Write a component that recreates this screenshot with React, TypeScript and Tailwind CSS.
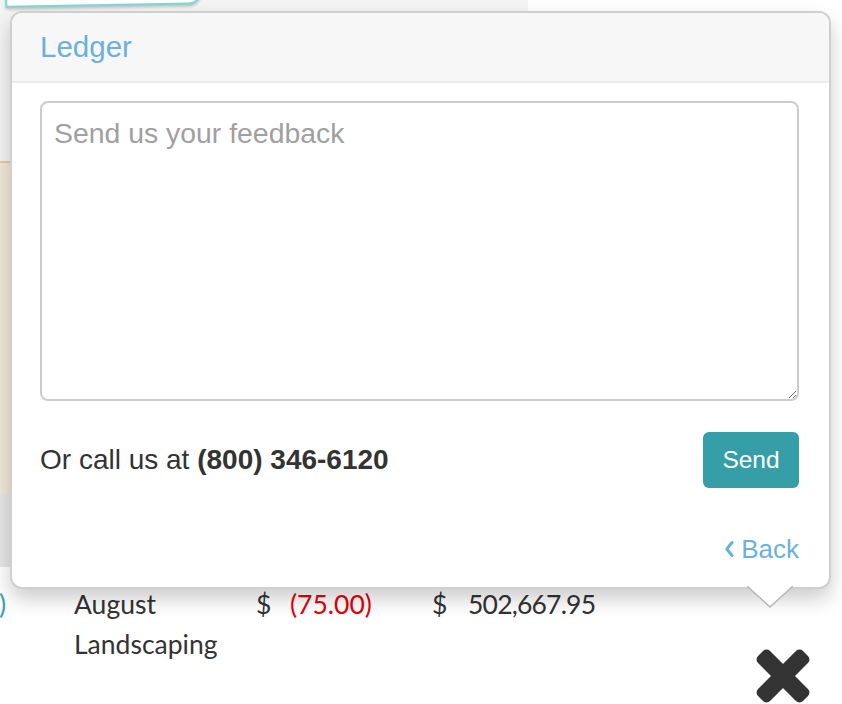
function ChevronLeft() {
  return (
    <svg width="11" height="18" viewBox="0 0 11 18" className="mr-[6px]">
      <path d="M8 2.5 L2.8 9 L8 15.5" fill="none" stroke="#6cb0de" strokeWidth="3" strokeLinecap="round" strokeLinejoin="round" />
    </svg>
  );
}

function CloseIcon() {
  return (
    <svg width="60" height="60" viewBox="0 0 60 60" className="absolute left-[753px] top-[646px]">
      <g transform="rotate(45 30 30)" fill="#333333">
        <rect x="-1.8" y="21.5" width="63.6" height="17" rx="5" />
        <rect x="21.5" y="-1.8" width="17" height="63.6" rx="5" />
      </g>
    </svg>
  );
}

function FeedbackPopover() {
  return (
    <div className="absolute left-[10px] top-[11px] w-[821px] rounded-[12px] border-2 border-[#cfcfcf] bg-white font-['Liberation_Sans',Arial,sans-serif] shadow-[0_10px_20px_rgba(0,0,0,0.2)]">
      <div className="rounded-t-[10px] border-b-2 border-[#ebebeb] bg-[#f7f7f7] px-[28px] py-[16px] text-[29.5px] leading-[36px] text-[#6cb0de]">
        Ledger
      </div>
      <div className="pl-[28px] pr-[30px] pt-[18px] pb-[20px]">
        <textarea
          placeholder="Send us your feedback"
          className="block h-[300px] w-full rounded-[8px] border-2 border-[#cccccc] px-[12px] pt-[10px] pb-[8px] text-[28.4px] leading-[40px] text-[#333] outline-none placeholder:text-[#a0a0a0]"
        />
        <div className="mt-[31px] flex items-center justify-between">
          <p className="text-[28px] text-[#333]">
            Or call us at <span className="font-bold">(800) 346-6120</span>
          </p>
          <button className="h-[56px] w-[96px] rounded-[6px] bg-[#359ea6] text-[24.5px] text-white">
            Send
          </button>
        </div>
        <div className="mt-[43px] flex justify-end">
          <a className="flex items-center text-[26px] leading-[36px] text-[#6cb0de]">
            <ChevronLeft />
            Back
          </a>
        </div>
      </div>
      <svg width="46" height="22" viewBox="0 0 46 22" className="absolute bottom-[-21px] left-[735px]">
        <polygon points="0,0 23,21 46,0" fill="#ffffff" />
        <polyline points="0,0 23,21 46,0" fill="none" stroke="#b8b8b8" strokeWidth="1.5" />
      </svg>
    </div>
  );
}

export default function App() {
  return (
    <div className="relative h-[704px] w-[842px] overflow-hidden bg-white">
      <div className="w-[528px]">
        <div className="h-[161px] overflow-hidden bg-[#f4f4f4]">
          <div className="ml-[5px] mt-[-40px] h-[46px] w-[196px] rotate-[-1deg] rounded-br-[12px] border-2 border-[#7dd8d8] bg-white shadow-[0_2px_3px_rgba(0,0,0,0.2)]" />
        </div>
        <div className="h-[333px] border-t-2 border-[#eccb9e] bg-[#f0e8d8]" />
        <div className="h-[73px] bg-[#e6e6e6]" />
      </div>

      <div className="mt-[17px] flex font-['Lato',sans-serif] text-[26.5px] leading-[40px] text-[#333]">
        <div className="ml-[-1px] w-[75px] text-[#2fa3b5]">)</div>
        <div className="w-[182px]">
          <div>August</div>
          <div>Landscaping</div>
        </div>
        <div className="w-[34px]">$</div>
        <div className="w-[142px] text-[#e8000b]">(75.00)</div>
        <div className="w-[36px]">$</div>
        <div className="tracking-[-0.8px]">502,667.95</div>
      </div>

      <CloseIcon />

      <FeedbackPopover />
    </div>
  );
}
